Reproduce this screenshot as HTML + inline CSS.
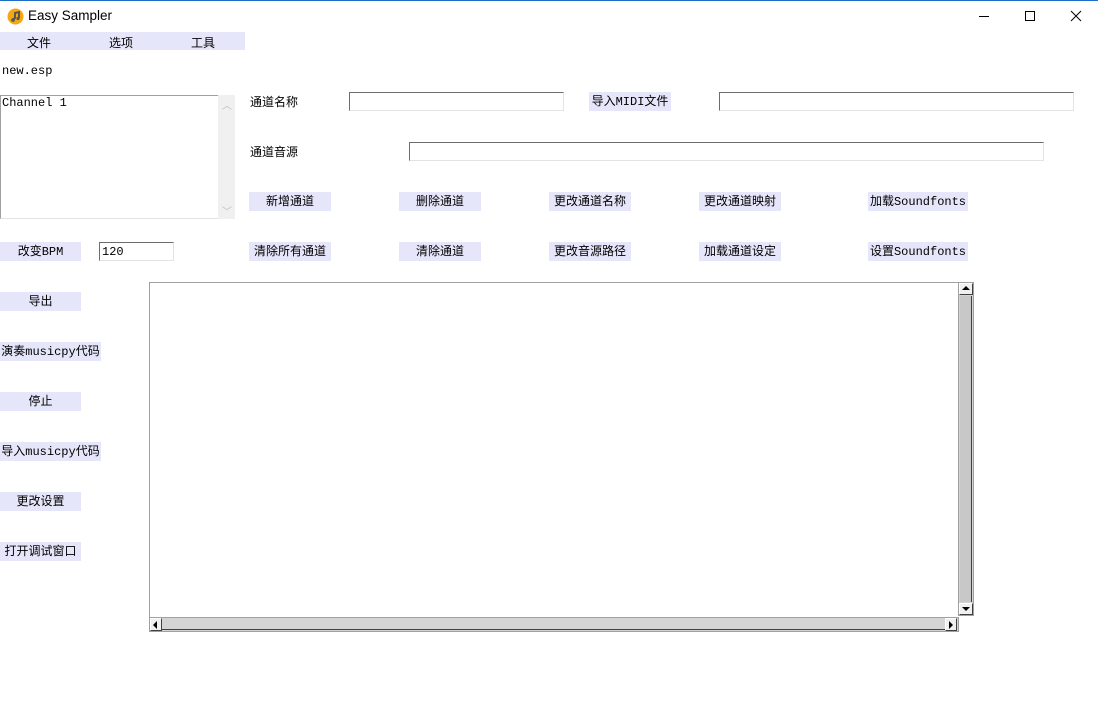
<!DOCTYPE html>
<html><head><meta charset="utf-8"><style>
*{margin:0;padding:0;box-sizing:border-box}
body{width:1098px;height:701px;background:#fff;position:relative;overflow:hidden;font-family:"Liberation Mono","Noto Sans CJK SC",monospace;font-size:12px;color:#000}
.a{position:absolute}
.b{position:absolute;background:#e6e6fa;height:19px;line-height:21px;text-align:center;white-space:nowrap;font-size:12px}
.e{position:absolute;background:#fff;border-top:1px solid #6d6d6d;border-left:1px solid #6d6d6d;border-right:1px solid #e3e3e3;border-bottom:1px solid #e3e3e3;height:19px}
.l{position:absolute;font-family:"Liberation Sans","Noto Sans CJK SC",sans-serif;font-size:12px}
.sb{background:#d4d4d4}
.arr{position:absolute;background:#f0f0f0;border:1px solid #fff;border-right-color:#404040;border-bottom-color:#404040}
</style></head><body>
<div class="a" style="left:0;top:0;width:1098px;height:1px;background:#1c6fc9"></div>
<svg class="a" style="left:7px;top:8px" width="17" height="17" viewBox="0 0 17 17"><circle cx="8.5" cy="8.5" r="8" fill="#f5a70f"/><path d="M5 12 L8 10 L8 5 L12 4 L12 10" stroke="#555" stroke-width="2" fill="none"/><circle cx="6" cy="12" r="1.8" fill="#555"/><circle cx="11" cy="10.5" r="1.6" fill="#555"/></svg>
<div class="l" style="left:28px;top:8px;font-size:13.5px">Easy Sampler</div>
<div class="a" style="left:979px;top:16px;width:10px;height:1px;background:#000"></div>
<div class="a" style="left:1025px;top:11px;width:10px;height:10px;border:1px solid #000"></div>
<svg class="a" style="left:1070px;top:10px" width="12" height="12"><path d="M1 1L11 11M11 1L1 11" stroke="#000" stroke-width="1"/></svg>

<div class="a" style="left:0;top:32px;width:245px;height:18px;background:#e6e6fa"></div>
<div class="l" style="left:27px;top:34px">文件</div>
<div class="l" style="left:109px;top:34px">选项</div>
<div class="l" style="left:191px;top:34px">工具</div>

<div class="a" style="left:2px;top:64px">new.esp</div>

<div class="a" style="left:0;top:95px;width:218px;height:124px;border-top:1px solid #a0a0a0;border-left:1px solid #a0a0a0;border-bottom:1px solid #e3e3e3"></div>
<div class="a" style="left:2px;top:96px">Channel 1</div>
<div class="a" style="left:218px;top:95px;width:17px;height:124px;background:#f0f0f0"></div>
<div class="a" style="left:222px;top:97px;color:#bbb;font-size:10px">︿</div>
<div class="a" style="left:222px;top:203px;color:#bbb;font-size:10px">﹀</div>

<div class="l" style="left:250px;top:93px">通道名称</div>
<div class="e" style="left:349px;top:92px;width:215px"></div>
<div class="b" style="left:589px;top:92px;width:82px">导入MIDI文件</div>
<div class="e" style="left:719px;top:92px;width:355px"></div>
<div class="l" style="left:250px;top:143px">通道音源</div>
<div class="e" style="left:409px;top:142px;width:635px"></div>

<div class="b" style="left:249px;top:192px;width:82px">新增通道</div>
<div class="b" style="left:399px;top:192px;width:82px">删除通道</div>
<div class="b" style="left:549px;top:192px;width:82px">更改通道名称</div>
<div class="b" style="left:699px;top:192px;width:82px">更改通道映射</div>
<div class="b" style="left:868px;top:192px;width:100px">加载Soundfonts</div>

<div class="b" style="left:0;top:242px;width:81px">改变BPM</div>
<div class="e" style="left:99px;top:242px;width:75px"></div>
<div class="a" style="left:102px;top:245px">120</div>
<div class="b" style="left:249px;top:242px;width:82px">清除所有通道</div>
<div class="b" style="left:399px;top:242px;width:82px">清除通道</div>
<div class="b" style="left:549px;top:242px;width:82px">更改音源路径</div>
<div class="b" style="left:699px;top:242px;width:82px">加载通道设定</div>
<div class="b" style="left:868px;top:242px;width:100px">设置Soundfonts</div>

<div class="b" style="left:0;top:292px;width:81px">导出</div>
<div class="b" style="left:0;top:342px;width:101px">演奏musicpy代码</div>
<div class="b" style="left:0;top:392px;width:81px">停止</div>
<div class="b" style="left:0;top:442px;width:101px">导入musicpy代码</div>
<div class="b" style="left:0;top:492px;width:81px">更改设置</div>
<div class="b" style="left:0;top:542px;width:81px">打开调试窗口</div>

<div class="a" style="left:149px;top:282px;width:810px;height:336px;border-top:1px solid #a0a0a0;border-left:1px solid #a0a0a0"></div>
<div class="a sb" style="left:958px;top:282px;width:16px;height:334px;border:1px solid #a0a0a0"></div>
<div class="arr" style="left:959px;top:283px;width:14px;height:12px"></div>
<svg class="a" style="left:962px;top:286px" width="8" height="5"><path d="M0 4L4 0L8 4Z" fill="#000"/></svg>
<div class="arr" style="left:959px;top:603px;width:14px;height:12px"></div>
<svg class="a" style="left:962px;top:607px" width="8" height="5"><path d="M0 0L8 0L4 4Z" fill="#000"/></svg>
<div class="a" style="left:960px;top:296px;width:12px;height:306px;background:#c8c8c8;border-right:1px solid #404040"></div>

<div class="a sb" style="left:149px;top:617px;width:810px;height:15px;border:1px solid #a0a0a0"></div>
<div class="arr" style="left:150px;top:618px;width:12px;height:13px"></div>
<svg class="a" style="left:153px;top:621px" width="5" height="8"><path d="M4 0L4 8L0 4Z" fill="#000"/></svg>
<div class="arr" style="left:945px;top:618px;width:12px;height:13px"></div>
<svg class="a" style="left:949px;top:621px" width="5" height="8"><path d="M0 0L0 8L4 4Z" fill="#000"/></svg>
<div class="a" style="left:162px;top:629px;width:783px;height:1px;background:#404040"></div>
</body></html>
